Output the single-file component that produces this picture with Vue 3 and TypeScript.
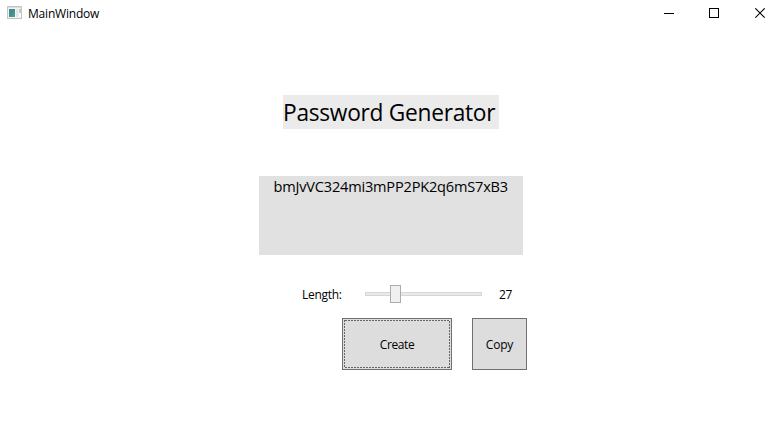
<script setup lang="ts">
import { computed, ref } from 'vue'

const min = 8
const max = 85
const length = ref(27)
const password = ref('bmJvVC324mi3mPP2PK2q6mS7xB3')
const alphabet = 'ABCDEFGHIJKLMNOPQRSTUVWXYZabcdefghijklmnopqrstuvwxyz0123456789'

const thumbOffset = computed(() => `${Math.round(((length.value - min) / (max - min)) * 101)}px`)

function create(): void {
  password.value = Array.from(
    { length: length.value },
    () => alphabet[Math.floor(Math.random() * alphabet.length)],
  ).join('')
}

function step(delta: number): void {
  length.value = Math.min(max, Math.max(min, length.value + delta))
}

function copy(): void {
  void navigator.clipboard?.writeText(password.value)
}
</script>

<template>
  <div class="window">
    <header class="titlebar">
      <svg class="app-icon" width="15" height="13" viewBox="0 0 15 13" shape-rendering="crispEdges">
        <defs>
          <linearGradient id="pane" x1="0" y1="0" x2="1" y2="1">
            <stop offset="0" stop-color="#4c7fa8" />
            <stop offset="0.5" stop-color="#3f8f8d" />
            <stop offset="1" stop-color="#57a683" />
          </linearGradient>
        </defs>
        <rect x="0.5" y="0.5" width="14" height="12" fill="#f2f2f2" stroke="#c4c4c4" />
        <rect x="1" y="1" width="13" height="1" fill="#dcdcdc" />
        <rect x="2" y="3" width="6" height="8" fill="url(#pane)" />
        <rect x="9" y="3" width="2" height="8" fill="#e2e4e8" />
        <rect x="12" y="3" width="2" height="4" fill="#b5d3c2" />
        <rect x="12" y="7" width="2" height="4" fill="#ffffff" />
      </svg>
      <span class="caption">MainWindow</span>
      <div class="controls">
        <svg class="control" width="11" height="11" viewBox="0 0 11 11" shape-rendering="crispEdges">
          <path d="M1 5.5H11" stroke="#000" />
        </svg>
        <svg class="control" width="11" height="11" viewBox="0 0 11 11" shape-rendering="crispEdges">
          <rect x="0.5" y="0.5" width="9" height="9" fill="none" stroke="#000" />
        </svg>
        <svg class="control" width="11" height="11" viewBox="0 0 11 11">
          <path d="M0.3 0.3L9.7 9.7M9.7 0.3L0.3 9.7" stroke="#000" stroke-width="1.1" />
        </svg>
      </div>
    </header>

    <main class="content">
      <h1 class="title"><span class="title-text">Password Generator</span></h1>
      <output class="result"><span class="result-text">{{ password }}</span></output>
      <div class="length-row">
        <span class="length-label">Length:</span>
        <div
          class="slider"
          role="slider"
          tabindex="0"
          :aria-valuenow="length"
          @keydown.left="step(-1)"
          @keydown.right="step(1)"
        >
          <div class="track"></div>
          <div class="thumb" :style="{ left: thumbOffset }"></div>
        </div>
        <span class="length-value">{{ length }}</span>
      </div>
      <div class="actions">
        <button class="button create" type="button" @click="create">
          <svg class="focus" width="106" height="48" viewBox="0 0 106 48" shape-rendering="crispEdges">
            <rect x="0.5" y="0.5" width="105" height="47" />
          </svg>
          <span class="create-text">Create</span>
        </button>
        <button class="button copy" type="button" @click="copy"><span class="copy-text">Copy</span></button>
      </div>
    </main>
  </div>
</template>

<style>
body {
  background: #fff;
}
</style>

<style scoped>
.window {
  width: 781px;
  height: 438px;
  overflow: hidden;
  background: #fff;
  color: #000;
  font: 12px/16px 'Open Sans', 'Noto Sans', sans-serif;
}
.titlebar {
  display: flex;
  align-items: flex-start;
  height: 30px;
}
.app-icon {
  margin: 6px 6px 0 7px;
}
.caption {
  margin-top: 6px;
  letter-spacing: -0.2px;
}
.controls {
  display: flex;
  gap: 35px;
  margin: 8px 15px 0 auto;
}
.control {
  display: block;
}
.content {
  display: flex;
  flex-direction: column;
  align-items: flex-start;
}
.title {
  box-sizing: border-box;
  width: 216px;
  height: 34px;
  margin: 65px 0 0 283px;
  background: #ebebeb;
  font-size: 24px;
  font-weight: 400;
  line-height: 34px;
  letter-spacing: -0.3px;
  white-space: nowrap;
}
.title-text {
  display: block;
  transform: scaleX(0.947);
  transform-origin: 0 0;
}
.result {
  width: 264px;
  height: 79px;
  margin: 47px 0 0 259px;
  background: #e1e1e1;
  font-size: 15px;
  line-height: 21px;
  text-align: center;
  white-space: nowrap;
  letter-spacing: -0.2px;
}
.result-text {
  display: inline-block;
  transform: scaleX(0.971);
}
.length-row {
  display: flex;
  align-items: center;
  height: 18px;
  margin: 30px 0 0 302px;
}
.length-label {
  width: 63px;
  padding-top: 2px;
  letter-spacing: -0.3px;
}
.slider {
  position: relative;
  display: flex;
  align-items: center;
  width: 117px;
  height: 18px;
  outline: none;
}
.track {
  box-sizing: border-box;
  width: 117px;
  height: 4px;
  border: 1px solid #d6d6d6;
  background: #e7eaea;
}
.thumb {
  position: absolute;
  top: 0;
  box-sizing: border-box;
  width: 11px;
  height: 18px;
  border: 1px solid #acacac;
  background: #f0f0f0;
}
.length-value {
  margin-left: 17px;
  padding-top: 2px;
  letter-spacing: -0.3px;
}
.actions {
  display: flex;
  gap: 20px;
  margin: 15px 0 0 342px;
}
.button {
  display: grid;
  place-items: center;
  box-sizing: border-box;
  height: 52px;
  padding: 0;
  border: 1px solid #707070;
  border-radius: 0;
  background: #ddd;
  color: #000;
  font: inherit;
}
.create {
  width: 110px;
}
.copy {
  width: 55px;
}
.create > * {
  grid-area: 1 / 1;
}
.create-text,
.copy-text {
  padding-top: 2px;
}
.create-text {
  letter-spacing: -0.4px;
}
.copy-text {
  letter-spacing: -0.2px;
}
.focus rect {
  fill: none;
  stroke: #666;
  stroke-dasharray: 2 1;
}
</style>
